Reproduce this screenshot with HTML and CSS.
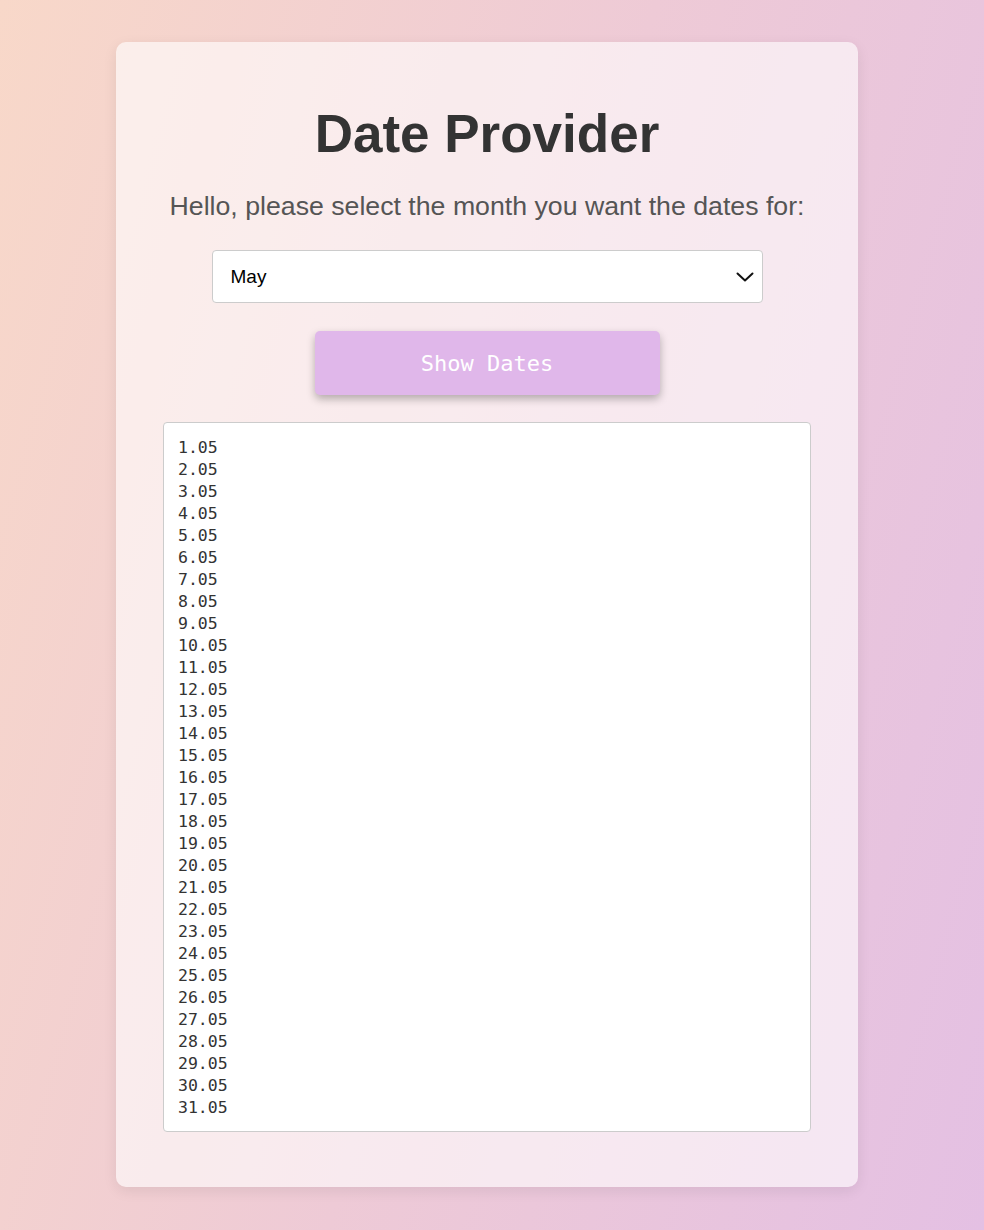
FILE: index.html
```html
<!DOCTYPE html>
<html lang="en">
<head>
<meta charset="utf-8">
<title>Date Provider</title>
<link rel="stylesheet" href="styles.css">
</head>
<body>
<div class="page">
  <main class="card">
    <h1 class="title">Date Provider</h1>
    <p class="subtitle">Hello, please select the month you want the dates for:</p>
    <div class="select-wrap">
      <select class="month-select">
        <option>January</option>
        <option>February</option>
        <option>March</option>
        <option>April</option>
        <option selected>May</option>
        <option>June</option>
        <option>July</option>
        <option>August</option>
        <option>September</option>
        <option>October</option>
        <option>November</option>
        <option>December</option>
      </select>
      <svg class="chevron" width="18" height="10" viewBox="0 0 18 10" aria-hidden="true"><path d="M1.5 1.5 L9 8.5 L16.5 1.5" fill="none" stroke="#111" stroke-width="2" stroke-linecap="round" stroke-linejoin="round"/></svg>
    </div>
    <button class="show-btn" type="button">Show Dates</button>
    <textarea class="output" readonly>1.05
2.05
3.05
4.05
5.05
6.05
7.05
8.05
9.05
10.05
11.05
12.05
13.05
14.05
15.05
16.05
17.05
18.05
19.05
20.05
21.05
22.05
23.05
24.05
25.05
26.05
27.05
28.05
29.05
30.05
31.05</textarea>
  </main>
</div>
</body>
</html>
```

FILE: styles.css
```css
html, body {
  margin: 0;
  padding: 0;
  height: 100%;
}

body {
  background: linear-gradient(105deg, #f8d8c9 0%, #eecad6 50%, #e4c0e3 100%);
  font-family: "Liberation Sans", Arial, sans-serif;
  overflow: hidden;
}

.page {
  display: flex;
  justify-content: center;
  padding: 42px 10px 0 0;
}

.card {
  width: 742px;
  box-sizing: border-box;
  padding: 62px 47px 55px;
  background: rgba(255, 255, 255, 0.6);
  border-radius: 10px;
  box-shadow: 0 4px 14px rgba(0, 0, 0, 0.08);
  display: flex;
  flex-direction: column;
  align-items: center;
}

.title {
  margin: 0;
  font-size: 53px;
  line-height: 60px;
  font-weight: bold;
  color: #333;
}

.subtitle {
  margin: 26px 0 0;
  font-size: 26.7px;
  line-height: 32px;
  color: #555;
}

.select-wrap {
  position: relative;
  margin-top: 28px;
  width: 551px;
  height: 53px;
}

.month-select {
  appearance: none;
  -webkit-appearance: none;
  width: 100%;
  height: 100%;
  box-sizing: border-box;
  border: 1px solid #ccc;
  border-radius: 4px;
  background: #fff;
  padding: 0 40px 0 18px;
  font-family: "Liberation Sans", Arial, sans-serif;
  font-size: 19px;
  color: #000;
}

.chevron {
  position: absolute;
  right: 9px;
  top: 22px;
}

.show-btn {
  margin-top: 28px;
  width: 345px;
  height: 64px;
  border: none;
  border-radius: 5px;
  background: #e0b7ea;
  color: #fff;
  font-family: "DejaVu Sans Mono", "Liberation Mono", monospace;
  font-size: 22px;
  box-shadow: 0 4px 8px rgba(0, 0, 0, 0.28);
  cursor: pointer;
}

.output {
  margin-top: 27px;
  width: 648px;
  height: 710px;
  box-sizing: border-box;
  border: 1px solid #ccc;
  border-radius: 4px;
  padding: 14px 14px 12px;
  background: #fff;
  font-family: "DejaVu Sans Mono", "Liberation Mono", monospace;
  font-size: 16.5px;
  line-height: 22px;
  color: #333;
  resize: none;
  overflow: hidden;
  display: block;
}
```
